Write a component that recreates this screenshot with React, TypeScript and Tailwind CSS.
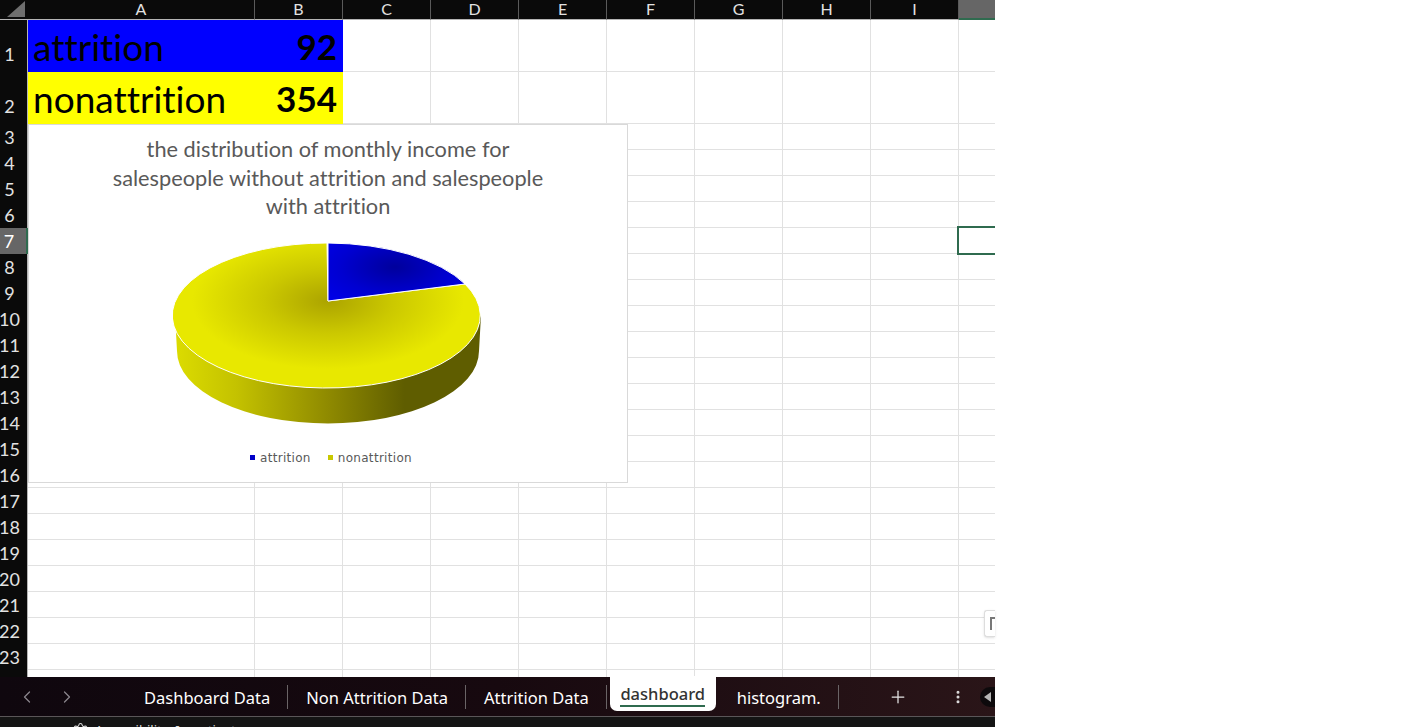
import { MoreVertical, Plus, ChevronLeft, ChevronRight, Settings } from "lucide-react";

const columns = [
  { label: "A", width: "w-[227px]" },
  { label: "B", width: "w-[88px]" },
  { label: "C", width: "w-[88px]" },
  { label: "D", width: "w-[88px]" },
  { label: "E", width: "w-[88px]" },
  { label: "F", width: "w-[88px]" },
  { label: "G", width: "w-[88px]" },
  { label: "H", width: "w-[88px]" },
  { label: "I", width: "w-[88px]" },
  { label: "", width: "w-[36px]" },
];

const rows = Array.from({ length: 24 }, (_, i) => i + 1);

function ColumnHeader() {
  return (
    <div className="flex h-5 bg-[#0a0a0a]">
      <div className="flex h-full w-[28px] shrink-0 items-end justify-end border-b border-[#b5b5b5] pb-[2px] pr-[3px]">
        <div className="h-0 w-0 border-b-[16px] border-l-[18px] border-b-[#6e6e6e] border-l-transparent" />
      </div>
      {columns.map((c) =>
        c.label ? (
          <div
            key={c.label}
            className={`${c.width} flex shrink-0 items-center justify-center border-b border-r border-b-[#b5b5b5] border-r-[#5a5a5a] pb-[1px] text-[16px] text-[#e2e2e2]`}
          >
            {c.label}
          </div>
        ) : (
          <div key="sel" className={`${c.width} shrink-0 border-b-2 border-[#2f6b4f] bg-[#666666]`} />
        )
      )}
    </div>
  );
}

function Row({ n }: { n: number }) {
  const tall = n <= 2;
  const selected = n === 7;
  const last = n === 24;
  return (
    <div className={`flex ${tall ? "h-[52px]" : last ? "h-[7px]" : "h-[26px]"}`}>
      <div
        className={`flex w-[28px] shrink-0 items-end justify-center whitespace-nowrap border-r pr-[8px] text-[18px] leading-[25px] ${
          tall ? "pb-[5px]" : ""
        } ${
          selected
            ? "border-r-2 border-[#2f6b4f] bg-[#666666] text-white"
            : "border-[#b5b5b5] bg-[#0a0a0a] text-[#e2e2e2]"
        }`}
      >
        {last ? "" : n}
      </div>
      {columns.map((c, i) => (
        <Cell key={i} col={i} row={n} width={c.width} last={last} />
      ))}
    </div>
  );
}

function Cell({ col, row, width, last }: { col: number; row: number; width: string; last: boolean }) {
  const edge = `${last ? "" : "border-b"} ${col < 9 ? "border-r" : ""} border-[#e1e1e1]`;
  if (row <= 2 && col < 2) {
    const bg = row === 1 ? "bg-[#0000ff]" : "bg-[#ffff00]";
    const text = col === 0 ? (row === 1 ? "attrition" : "nonattrition") : row === 1 ? "92" : "354";
    return (
      <div
        className={`${width} ${bg} flex shrink-0 items-center overflow-hidden leading-none text-black ${
          col === 0 ? "pl-[5px] text-[37px]" : "justify-end pr-[6px] text-[35px] font-bold"
        }`}
      >
        {text}
      </div>
    );
  }
  return <div className={`${width} ${edge} shrink-0`} />;
}

function PieChart() {
  return (
    <div className="absolute left-[28px] top-[124px] flex h-[359px] w-[600px] flex-col items-center border border-[#d9d9d9] bg-white">
      <div className="mt-[10px] w-[470px] text-center text-[21.75px] leading-[28.5px] text-[#595959]">
        the distribution of monthly income for salespeople without attrition and salespeople with attrition
      </div>
      <svg width="310" height="194" viewBox="0 0 310 194" className="mt-[22px]">
        <defs>
          <linearGradient id="side" x1="0" x2="1" y1="0" y2="0">
            <stop offset="0" stopColor="#dcdc00" />
            <stop offset="0.2" stopColor="#c4c200" />
            <stop offset="0.5" stopColor="#8f8a00" />
            <stop offset="0.75" stopColor="#5f5d00" />
            <stop offset="1" stopColor="#5f5d00" />
          </linearGradient>
          <radialGradient id="top" gradientUnits="userSpaceOnUse" cx="155" cy="58" r="160" gradientTransform="translate(0 29) scale(1 0.5)">
            <stop offset="0" stopColor="#aca400" />
            <stop offset="0.4" stopColor="#cbc800" />
            <stop offset="0.85" stopColor="#e8e800" />
            <stop offset="1" stopColor="#e8e800" />
          </radialGradient>
          <radialGradient id="wedge" gradientUnits="userSpaceOnUse" cx="222" cy="24" r="90" gradientTransform="translate(0 12) scale(1 0.5)">
            <stop offset="0" stopColor="#00009c" />
            <stop offset="0.6" stopColor="#0000d0" />
            <stop offset="1" stopColor="#0000e8" />
          </radialGradient>
        </defs>
        <path d="M2 72 L4 108 A151 72.5 0 0 0 306 108 L308 72 A154 72.5 0 0 1 2 72 Z" fill="url(#side)" />
        <path d="M155 58 L292 41 A154 72.5 0 1 1 154 0 Z" fill="url(#top)" stroke="#ffffff" strokeWidth="1" />
        <path d="M155 58 L155 0 A154 72.5 0 0 1 292 41 Z" fill="url(#wedge)" stroke="#ffffff" strokeWidth="1" />
      </svg>
      <div className="ml-[6px] mt-[15px] flex items-center leading-none tracking-[0.3px] text-[#595959] [font-family:'DejaVu_Sans',sans-serif]">
        <span className="mr-[5px] h-[5px] w-[5px] bg-[#0000c8]" />
        <span className="text-[12px]">attrition</span>
        <span className="ml-[17px] mr-[5px] h-[5px] w-[5px] bg-[#c8c800]" />
        <span className="text-[12px]">nonattrition</span>
      </div>
    </div>
  );
}

function Tab({ label }: { label: string }) {
  return (
    <div className="flex h-[26px] items-center">
      <span className="whitespace-nowrap pl-[18px] pr-[17px] pt-[3px] text-[16.5px] leading-none text-white">{label}</span>
      <span className="h-[24px] w-px bg-[#6a6466]" />
    </div>
  );
}

function SheetTabs() {
  return (
    <div className="flex h-[40px] items-center border-b border-[#5a5658] bg-gradient-to-r from-[#0f070e] via-[#17090f] to-[#2a1518] [font-family:'Noto_Sans',sans-serif]">
      <ChevronLeft className="ml-[17px] h-[20px] w-[20px] text-[#8a858c]" strokeWidth={1.5} />
      <ChevronRight className="ml-[20px] h-[20px] w-[20px] text-[#8a858c]" strokeWidth={1.5} />
      <div className="ml-[49px] flex items-center">
        <Tab label="Dashboard Data" />
        <Tab label="Non Attrition Data" />
        <Tab label="Attrition Data" />
      </div>
      <div className="-mt-[6px] ml-[3px] flex h-[35px] w-[106px] flex-col items-center rounded-b-[7px] bg-white pt-[7px]">
        <span className="text-[16.5px] font-medium leading-[21px] text-[#333333]">dashboard</span>
        <span className="mt-[1px] h-[2px] w-[85px] bg-[#2f6b4f]" />
      </div>
      <span className="ml-[21px] whitespace-nowrap pt-[3px] text-[16.5px] leading-none text-white">histogram.</span>
      <span className="ml-[17px] h-[24px] w-px bg-[#6a6466]" />
      <Plus className="ml-[49px] h-[20px] w-[20px] text-[#e5e5e5]" strokeWidth={1.5} />
      <MoreVertical className="ml-[42px] h-[16px] w-[16px] text-[#dddddd]" strokeWidth={2.5} />
      <div className="ml-[14px] flex h-[20px] w-[15px] items-center rounded-l-full bg-[#0d0a0c] pl-[4px]">
        <span className="h-0 w-0 border-y-[5px] border-r-[7px] border-y-transparent border-r-[#b5b5b5]" />
      </div>
    </div>
  );
}

// only the top few pixels of this bar are inside the window
function StatusBar() {
  return (
    <div className="flex h-[10px] items-start overflow-hidden bg-[#141414] pl-[72px] pt-[5px] text-[13px] leading-none text-[#dddddd] [font-family:'Noto_Sans',sans-serif]">
      <Settings className="h-[17px] w-[17px] shrink-0" strokeWidth={1.5} />
      <span className="ml-[6px] mt-[2px] whitespace-nowrap">Accessibility: Investigate</span>
    </div>
  );
}

export default function App() {
  return (
    <div className="h-[727px] w-[1423px] overflow-hidden bg-white [font-family:Lato,sans-serif] [font-variant-ligatures:none]">
      <div className="relative w-[995px]">
        <ColumnHeader />
        {rows.map((n) => (
          <Row key={n} n={n} />
        ))}
        <PieChart />
        {/* active cell */}
        <div className="absolute left-[957px] top-[226px] h-[29px] w-[38px] border-y-2 border-l-2 border-[#2f6b4f]" />
        {/* paste options button */}
        <div className="absolute left-[984px] top-[610px] flex h-[27px] w-[11px] items-center rounded-l-[3px] border-y border-l border-[#dddddd] bg-white pl-[5px] shadow-sm">
          <span className="h-[13px] w-[6px] border-l-2 border-t-2 border-[#777777]" />
        </div>
        <SheetTabs />
        <StatusBar />
      </div>
    </div>
  );
}
